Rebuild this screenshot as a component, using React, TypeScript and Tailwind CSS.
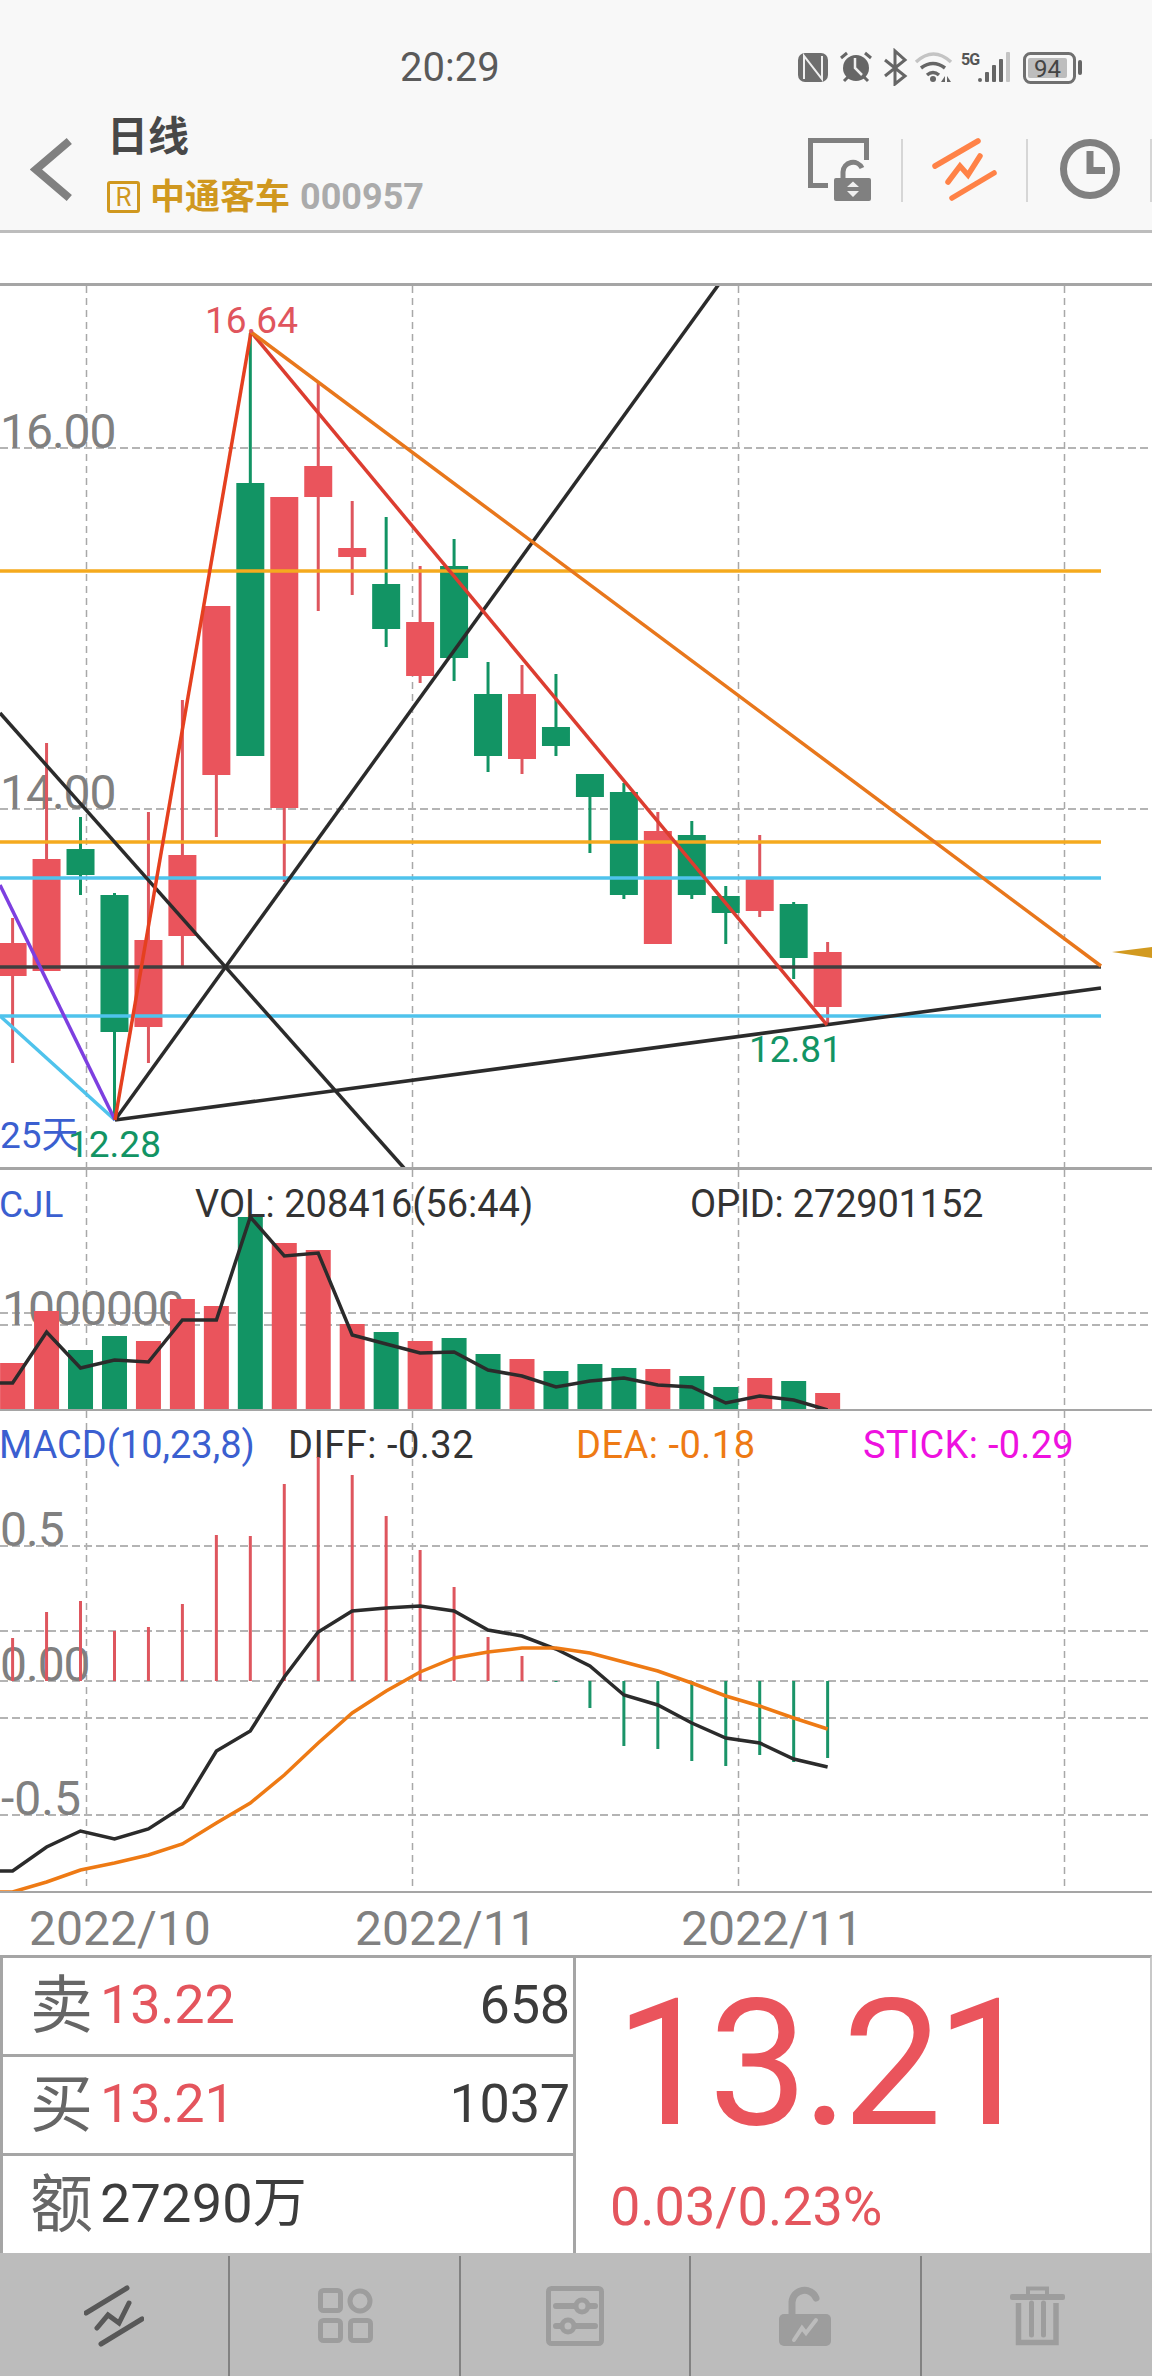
import React from "react";

const RED = "#ea545c";
const WICKR = "#de565e";
const GREEN = "#129464";
const cx = (i: number) => 12.6 + 33.96 * i;

type C = [string, number, number, number, number];
const candles: C[] = [
  ["r", 918, 943, 976, 1063],
  ["r", 743, 859, 971, 971],
  ["g", 817, 849, 875, 895],
  ["g", 893, 895, 1032, 1120],
  ["r", 812, 940, 1027, 1063],
  ["r", 700, 855, 936, 966],
  ["r", 606, 606, 775, 837],
  ["g", 333, 483, 756, 756],
  ["r", 497, 497, 808, 882],
  ["r", 383, 466, 497, 611],
  ["r", 501, 548, 557, 595],
  ["g", 517, 584, 629, 647],
  ["r", 566, 622, 676, 683],
  ["g", 539, 566, 658, 681],
  ["g", 662, 694, 756, 772],
  ["r", 665, 694, 759, 774],
  ["g", 674, 727, 746, 756],
  ["g", 774, 774, 797, 853],
  ["g", 783, 792, 895, 899],
  ["r", 812, 831, 944, 944],
  ["g", 821, 835, 895, 899],
  ["g", 886, 896, 913, 944],
  ["r", 835, 879, 911, 917],
  ["g", 902, 904, 958, 979],
  ["r", 942, 952, 1007, 1025],
];

const volTops = [1363, 1311, 1350, 1336, 1341, 1299, 1306, 1217, 1243, 1250, 1324, 1332, 1341, 1338, 1354, 1359, 1371, 1364, 1368, 1369, 1376, 1387, 1378, 1381, 1393];
const volLine = [1383, 1332, 1368, 1360, 1362, 1320, 1320, 1217, 1256, 1253, 1335, 1344, 1353, 1352, 1370, 1376, 1387, 1381, 1378, 1385, 1387, 1403, 1396, 1400, 1410];
const macdSticks = [1638, 1612, 1601, 1631, 1627, 1604, 1535, 1536, 1484, 1457, 1475, 1516, 1550, 1587, 1637, 1656, 1682, 1708, 1746, 1749, 1761, 1766, 1755, 1762, 1758];
const diff = [1871, 1847, 1831, 1839, 1829, 1807, 1751, 1731, 1677, 1632, 1611, 1608, 1606, 1611, 1630, 1636, 1649, 1666, 1695, 1705, 1723, 1738, 1743, 1759, 1767];
const dea = [1892, 1882, 1870, 1863, 1855, 1844, 1823, 1803, 1775, 1743, 1713, 1691, 1672, 1658, 1652, 1648, 1648, 1653, 1662, 1671, 1683, 1696, 1706, 1718, 1729];

const poly = (ys: number[], first: number) =>
  `0,${first} ` + ys.map((y, i) => `${cx(i).toFixed(1)},${y}`).join(" ");

const VGrid = ({ y1, y2 }: { y1: number; y2: number }) => (
  <>
    {[86.5, 412.5, 738.5, 1064.5].map((x) => (
      <line key={x} x1={x} x2={x} y1={y1} y2={y2} stroke="#a8a8a8" strokeWidth={1.5} strokeDasharray="7 5" />
    ))}
  </>
);
const HGrid = ({ y }: { y: number }) => (
  <line x1={0} x2={1152} y1={y} y2={y} stroke="#b4b4b4" strokeWidth={2} strokeDasharray="8 4" />
);

const MainChart = () => (
  <svg viewBox="0 286 1152 881" className="block w-[1152px] h-[881px] shrink-0">
    <VGrid y1={286} y2={1167} />
    <HGrid y={448} />
    <HGrid y={809} />
    <text x={0} y={448} className="fill-[#808080] text-[48px] tracking-[-1px]">16.00</text>
    <text x={0} y={809} className="fill-[#808080] text-[48px] tracking-[-1px]">14.00</text>
    {candles.map(([c, wt, bt, bb, wb], i) => {
      const x = cx(i);
      return (
        <g key={i}>
          <line x1={x} x2={x} y1={wt} y2={wb} stroke={c === "r" ? WICKR : GREEN} strokeWidth={3} />
          <rect x={x - 14} y={bt} width={28} height={bb - bt} fill={c === "r" ? RED : GREEN} />
        </g>
      );
    })}
    <line x1={0} x2={1101} y1={571} y2={571} stroke="#f5aa1e" strokeWidth={3.5} />
    <line x1={0} x2={1101} y1={842} y2={842} stroke="#f5aa1e" strokeWidth={3.5} />
    <line x1={0} x2={1101} y1={878} y2={878} stroke="#4fc3ec" strokeWidth={3.5} />
    <line x1={0} x2={1101} y1={1016} y2={1016} stroke="#4fc3ec" strokeWidth={3.5} />
    <line x1={0} x2={1101} y1={967} y2={967} stroke="#3f3f3f" strokeWidth={3.5} />
    <line x1={0} y1={1016} x2={115} y2={1120} stroke="#4fc3ec" strokeWidth={3.5} />
    <line x1={0} y1={885} x2={115} y2={1120} stroke="#7d3fe0" strokeWidth={3.5} />
    <line x1={115} y1={1120} x2={719} y2={284} stroke="#2b2b2b" strokeWidth={3.5} />
    <line x1={0} y1={713} x2={404} y2={1168} stroke="#2b2b2b" strokeWidth={3.5} />
    <line x1={115} y1={1120} x2={1101} y2={988} stroke="#2b2b2b" strokeWidth={3.5} />
    <line x1={115} y1={1120} x2={251} y2={332} stroke="#e5401f" strokeWidth={3.5} />
    <line x1={251} y1={332} x2={827} y2={1025} stroke="#dc3d30" strokeWidth={3.5} />
    <line x1={251} y1={332} x2={1101} y2={966} stroke="#e8771c" strokeWidth={3.5} />
    <polygon points="1112,952 1152,947 1152,958" fill="#d29a20" />
    <text x={205} y={333} className="fill-[#e0555d] text-[37px]">16.64</text>
    <text x={68} y={1157} className="fill-[#129464] text-[37px]">12.28</text>
    <text x={0} y={1148} className="fill-[#3b5fd0] text-[37px]">25天</text>
    <text x={749} y={1062} className="fill-[#129464] text-[37px]">12.81</text>
  </svg>
);

const VolChart = () => (
  <svg viewBox="0 1170 1152 239" className="block w-[1152px] h-[239px] shrink-0">
    <VGrid y1={1170} y2={1409} />
    <HGrid y={1313} />
    <HGrid y={1325} />
    <text x={2} y={1325} className="fill-[#808080] text-[48px] tracking-[-1px]">1000000</text>
    <text x={-1} y={1217} className="fill-[#3b5fd0] text-[37px]">CJL</text>
    <text x={195} y={1217} className="fill-[#333333] text-[38px]">VOL: 208416(56:44)</text>
    <text x={690} y={1217} className="fill-[#333333] text-[38px] tracking-[-0.2px]">OPID: 272901152</text>
    {volTops.map((t, i) => (
      <rect key={i} x={cx(i) - 12.5} y={t} width={25} height={1409 - t} fill={candles[i][0] === "r" ? RED : GREEN} />
    ))}
    <polyline points={poly(volLine, 1383)} fill="none" stroke="#2b2b2b" strokeWidth={3.5} />
  </svg>
);

const MacdChart = () => (
  <svg viewBox="0 1411 1152 480" className="block w-[1152px] h-[480px] shrink-0">
    <VGrid y1={1411} y2={1891} />
    <HGrid y={1546} />
    <HGrid y={1631} />
    <HGrid y={1681} />
    <HGrid y={1718} />
    <HGrid y={1815} />
    <text x={0} y={1546} className="fill-[#808080] text-[48px] tracking-[-1px]">0.5</text>
    <text x={0} y={1681} className="fill-[#808080] text-[48px] tracking-[-1px]">0.00</text>
    <text x={1} y={1815} className="fill-[#808080] text-[48px]">-0.5</text>
    <text x={-1} y={1458} className="fill-[#3b5fd0] text-[38px]">MACD(10,23,8)</text>
    <text x={288} y={1458} className="fill-[#333333] text-[38px] tracking-[0.5px]">DIFF: -0.32</text>
    <text x={576} y={1458} className="fill-[#ee7a14] text-[38px] tracking-[0.5px]">DEA: -0.18</text>
    <text x={863} y={1458} className="fill-[#ee11e0] text-[38px] tracking-[0.3px]">STICK: -0.29</text>
    {macdSticks.map((t, i) => (
      <line key={i} x1={cx(i)} x2={cx(i)} y1={1681} y2={t} stroke={i < 16 ? WICKR : "#1a9468"} strokeWidth={3} />
    ))}
    <polyline points={poly(diff, 1871)} fill="none" stroke="#2b2b2b" strokeWidth={3.5} />
    <polyline points={poly(dea, 1892)} fill="none" stroke="#ee7a14" strokeWidth={3.5} />
  </svg>
);

const StatusIcons = () => (
  <svg viewBox="796 48 290 38" className="block w-[290px] h-[38px]">
    <rect x={798} y={53} width={30} height={29} rx={7} fill="#6e6e6e" />
    <path d="M804 79V56L822 79V56" fill="none" stroke="#f0f0f0" strokeWidth={2} />
    <path d="M841 58L847 53M871 58L865 53M844 81L848 77M868 81L864 77" stroke="#666" strokeWidth={3} />
    <circle cx={856} cy={68} r={13} fill="#666" />
    <path d="M855 58V68L862 75" fill="none" stroke="#f0f0f0" strokeWidth={2.5} />
    <path d="M885 60L905 76L895 84V51L905 60L885 76" fill="none" stroke="#666" strokeWidth={3} />
    <path d="M916 62Q933.5 46 951 62" fill="none" stroke="#c4c4c4" strokeWidth={3.5} />
    <path d="M921 68Q933 59 945 68M927 75Q933 70 939 75" fill="none" stroke="#666" strokeWidth={3.5} />
    <circle cx={933} cy={79} r={3} fill="#666" />
    <path d="M941 82L945 76V82ZM947 76L951 82H947Z" fill="#666" />
    <text x={961} y={65} className="fill-[#555555] text-[16px] font-bold tracking-[-1px]">5G</text>
    <rect x={978} y={78} width={4} height={4} rx={2} fill="#666" />
    <rect x={985} y={72} width={4} height={10} rx={1} fill="#666" />
    <rect x={992} y={65} width={4} height={17} rx={1} fill="#666" />
    <rect x={999} y={59} width={4} height={23} rx={1} fill="#666" />
    <rect x={1006} y={52} width={4} height={30} rx={1} fill="#c4c4c4" />
    <rect x={1024.5} y={53.5} width={50} height={29} rx={6} fill="none" stroke="#707070" strokeWidth={3} />
    <rect x={1028} y={58} width={39} height={20} rx={2} fill="#bdbdbd" />
    <text x={1034} y={77} className="fill-[#444444] text-[24px]">94</text>
    <rect x={1078} y={60} width={4} height={15} rx={2} fill="#666" />
  </svg>
);

const BackIcon = () => (
  <svg viewBox="30 136 44 68" className="block w-[44px] h-[68px] shrink-0">
    <path d="M69.3 141L36 169.5L69.3 198" fill="none" stroke="#808080" strokeWidth={8} />
  </svg>
);
const LockScreenIcon = () => (
  <svg viewBox="806 136 67 68" className="block w-[67px] h-[68px] shrink-0">
    <path d="M866.5 160V140.5H810.5V185.5H828" fill="none" stroke="#808080" strokeWidth={5} />
    <path d="M843 178V172A10 10 0 0 1 862 168" fill="none" stroke="#808080" strokeWidth={5} />
    <rect x={834} y={178} width={37} height={23} rx={2} fill="#808080" />
    <path d="M853 181.5L859 187H847ZM853 197L859 191H847Z" fill="#f0f0f0" />
  </svg>
);
const ZigIcon = () => (
  <svg viewBox="932 136 65 68" className="block w-[65px] h-[68px] shrink-0">
    <path d="M935 166L978 141M952 198L994 173M948 182L960 166L968 175L980 156" fill="none" stroke="#ff8247" strokeWidth={5.5} strokeLinecap="round" />
  </svg>
);
const ClockIcon = () => (
  <svg viewBox="1056 136 68 68" className="block w-[68px] h-[68px] shrink-0">
    <circle cx={1090} cy={169} r={26.5} fill="none" stroke="#808080" strokeWidth={7} />
    <path d="M1090 151V170.5H1105" fill="none" stroke="#808080" strokeWidth={7} />
  </svg>
);

const Divider = () => <div className="w-[2px] h-[63px] bg-[#d6d6d6] shrink-0" />;

const BottomZig = () => (
  <svg viewBox="84 2285 60 62" className="block w-[60px] h-[62px]">
    <path d="M86 2313L127 2288M101 2344L142 2319M97 2328L108 2315L119 2323L129 2303" fill="none" stroke="#585858" strokeWidth={5} strokeLinecap="round" />
  </svg>
);
const BottomApps = () => (
  <svg viewBox="315 2285 60 62" className="block w-[60px] h-[62px]">
    <g fill="none" stroke="#9d9d9d" strokeWidth={5}>
      <rect x={320.5} y={2290.5} width={20} height={20} rx={3} />
      <circle cx={360} cy={2301} r={10} />
      <rect x={320.5} y={2320.5} width={20} height={20} rx={3} />
      <rect x={350.5} y={2320.5} width={20} height={20} rx={3} />
    </g>
  </svg>
);
const BottomSettings = () => (
  <svg viewBox="546 2285 60 62" className="block w-[60px] h-[62px]">
    <rect x={549.5} y={2288.5} width={53} height={55} rx={3} fill="none" stroke="#9d9d9d" strokeWidth={5} />
    <path d="M557 2306H596M557 2326H596" stroke="#9d9d9d" strokeWidth={6} strokeLinecap="round" />
    <circle cx={583} cy={2306} r={6} fill="#bcbcbc" stroke="#9d9d9d" strokeWidth={5} />
    <circle cx={569} cy={2326} r={6} fill="#bcbcbc" stroke="#9d9d9d" strokeWidth={5} />
  </svg>
);
const BottomLock = () => (
  <svg viewBox="777 2285 60 62" className="block w-[60px] h-[62px]">
    <path d="M794 2318V2302A12.5 12.5 0 0 1 818 2298" fill="none" stroke="#9d9d9d" strokeWidth={7} strokeLinecap="round" />
    <rect x={781} y={2314} width={52} height={32} rx={5} fill="#9d9d9d" />
    <path d="M796 2340L804 2328L808 2333L818 2320" fill="none" stroke="#bcbcbc" strokeWidth={4} strokeLinecap="round" />
  </svg>
);
const BottomTrash = () => (
  <svg viewBox="1008 2285 60 62" className="block w-[60px] h-[62px]">
    <path d="M1029 2295V2288.5H1048V2295" fill="none" stroke="#9d9d9d" strokeWidth={4} />
    <rect x={1011} y={2294} width={55} height={6} rx={2} fill="#9d9d9d" />
    <path d="M1019.5 2303V2342.5H1057V2303" fill="none" stroke="#9d9d9d" strokeWidth={5.5} />
    <path d="M1032.5 2303V2335M1044.5 2303V2335" stroke="#9d9d9d" strokeWidth={5} strokeLinecap="round" />
  </svg>
);

const Row = ({ label, price, qty, border }: { label: string; price: string; qty: string; border: boolean }) => (
  <div className={`h-[99px] flex items-center pl-[27px] pr-[3px] pb-[2px] ${border ? "border-b-[3px] border-[#a5a5a5]" : ""}`}>
    <span className="text-[63px] leading-none text-[#666666]">{label}</span>
    <span className="text-[54px] leading-none text-[#e4555d] ml-[7px] tracking-[-0.2px]">{price}</span>
    <span className="ml-auto text-[54px] leading-none text-[#3c3c3c] tracking-[-0.2px]">{qty}</span>
  </div>
);

export default function App() {
  return (
    <div className="w-[1152px] h-[2376px] bg-white flex flex-col overflow-hidden font-['Roboto','Noto_Sans_CJK_SC',sans-serif]">
      <header className="h-[233px] shrink-0 bg-[#f8f8f8] border-b-[3px] border-[#bdbdbd] pt-[48px]">
        <div className="h-[38px] flex items-center pl-[400px]">
          <span className="mt-[2px] text-[40px] leading-none text-[#5a5a5a]">20:29</span>
          <div className="ml-auto mr-[66px]"><StatusIcons /></div>
        </div>
        <div className="mt-[24px] flex items-start pl-[30px]">
          <div className="mt-[26px]"><BackIcon /></div>
          <div className="ml-[33px] flex flex-col">
            <span className="mt-[3px] text-[41px] leading-[48px] font-bold text-[#484848]">日线</span>
            <div className="mt-[18px] flex items-center">
              <span className="w-[33px] h-[32px] border-[3px] border-[#d0981f] rounded-[3px] flex items-center justify-center text-[26px] leading-none text-[#d0981f]">R</span>
              <span className="ml-[10px] text-[35px] leading-none font-bold text-[#d0981f]">中通客车</span>
              <span className="ml-[10px] text-[36px] leading-none font-bold text-[#ababab]">000957</span>
            </div>
          </div>
          <div className="ml-auto mt-[26px] flex items-center">
            <LockScreenIcon />
            <div className="ml-[28px]"><Divider /></div>
            <div className="ml-[29px]"><ZigIcon /></div>
            <div className="ml-[29px]"><Divider /></div>
            <div className="ml-[28px]"><ClockIcon /></div>
            <div className="ml-[26px]"><Divider /></div>
          </div>
        </div>
      </header>

      <div className="h-[50px] shrink-0" />
      <div className="h-[3px] shrink-0 bg-[#a5a5a5]" />
      <MainChart />
      <div className="h-[3px] shrink-0 bg-[#a5a5a5]" />
      <VolChart />
      <div className="h-[2px] shrink-0 bg-[#a5a5a5]" />
      <MacdChart />
      <div className="h-[2px] shrink-0 bg-[#a5a5a5]" />

      <div className="h-[62px] shrink-0 flex pl-[29px] pt-[10px] text-[48px] leading-[52px] text-[#808080]">
        <span className="w-[326px]">2022/10</span>
        <span className="w-[326px]">2022/11</span>
        <span className="w-[326px]">2022/11</span>
      </div>

      <div className="h-[298px] shrink-0 flex border-t-[3px] border-l-[3px] border-r-[2px] border-[#a5a5a5] border-r-[#c8c8c8]">
        <div className="w-[573px] shrink-0 border-r-[3px] border-[#a5a5a5]">
          <Row label="卖" price="13.22" qty="658" border />
          <Row label="买" price="13.21" qty="1037" border />
          <div className="h-[96px] flex items-center pl-[27px]">
            <span className="text-[63px] leading-none text-[#666666]">额</span>
            <span className="text-[54px] leading-none text-[#3c3c3c] ml-[7px] tracking-[0.2px]">27290万</span>
          </div>
        </div>
        <div className="flex-1 flex flex-col pl-[39px] pt-[17px]">
          <span className="text-[177px] leading-none text-[#ea545c] tracking-[-6px]">13.21</span>
          <span className="mt-[28px] -ml-[5px] text-[54px] leading-none text-[#e4555d]">0.03/0.23%</span>
        </div>
      </div>

      <div className="flex-1 bg-[#bcbcbc] pt-[3px] grid grid-cols-5">
        <div className="border-r-2 border-[#828282] flex items-center justify-center"><BottomZig /></div>
        <div className="border-r-2 border-[#828282] flex items-center justify-center"><BottomApps /></div>
        <div className="border-r-2 border-[#828282] flex items-center justify-center"><BottomSettings /></div>
        <div className="border-r-2 border-[#828282] flex items-center justify-center"><BottomLock /></div>
        <div className="flex items-center justify-center"><BottomTrash /></div>
      </div>
    </div>
  );
}
